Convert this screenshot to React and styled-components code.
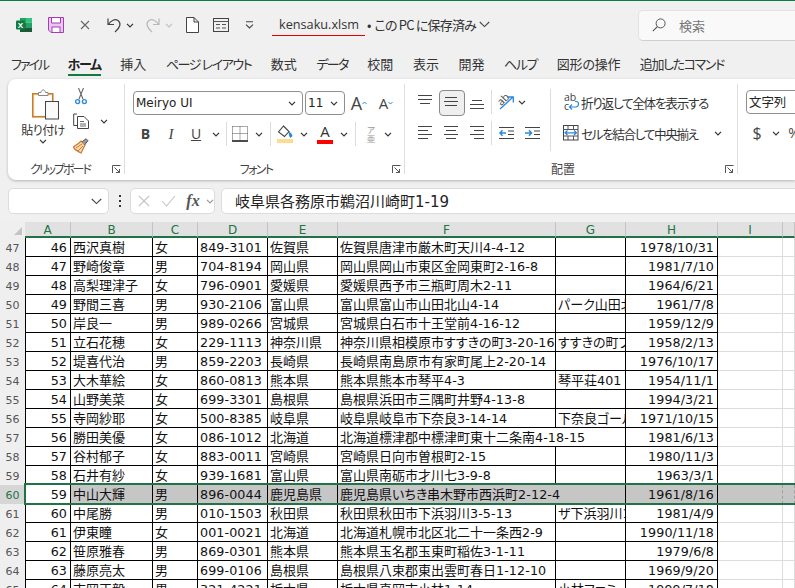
import React from "react";
import styled, { createGlobalStyle } from "styled-components";

const Global = createGlobalStyle`
  html, body { margin: 0; padding: 0; background: #f0f0f0; }
  * { box-sizing: border-box; }
`;

const UI = `"Noto Sans CJK JP", "Noto Sans", sans-serif`;
const SHEET_FONT = `"DejaVu Sans", "Noto Sans CJK JP", sans-serif`;
const COLS = "25px 46px 82px 45px 70px 70px 218px 70px 92px 65px 1fr";

const Window = styled.div`
  width: 795px; height: 588px; overflow: hidden; display: flex; flex-direction: column;
  background: #f0f0f0; border-top: 1px solid #107c41; font-family: ${UI};
  font-feature-settings: "palt" 1; color: #333;
`;
const TitleBar = styled.div`
  height: 50px; flex: none; display: flex; align-items: center; padding-left: 8px; padding-bottom: 2px;
`;
const Slot = styled.div`
  flex: none; display: flex; align-items: center; justify-content: center;
  width: ${p => p.$w || 24}px; height: ${p => p.$h || 24}px; margin-left: ${p => p.$ml || 0}px;
  color: #444; overflow: visible;
`;
const DocTitle = styled.div`
  margin-left: 11px; flex: none; display: flex; align-items: center; gap: 2px; font-size: 13px; color: #333;
`;
const FileName = styled.span`
  font-family: "Open Sans", sans-serif; font-size: 12.7px; padding: 0 6px 1px 7px; border-bottom: 1px solid #e00000; line-height: 19px;
`;
const SaveState = styled.span`
  display: inline-flex; align-items: center; gap: 3px; padding-bottom: 1px;
`;
const SaveDot = styled.span`
  margin-right: 3px;
`;
const SaveText = styled.span`
  letter-spacing: -0.8px;
`;
const SearchBox = styled.div`
  margin-left: auto; margin-right: -12px; width: 169px; height: 31px; flex: none; background: #f9f9f9;
  border: 1px solid #e2e2e2; border-bottom-color: #cfcfcf; border-radius: 5px; display: flex; align-items: center;
  padding-left: 13px; gap: 13px; font-size: 13px; color: #777;
`;
const TabBar = styled.div`
  height: 28px; flex: none; display: flex; align-items: flex-start; padding: 3px 0 0 11px; gap: 19.5px;
`;
const Tab = styled.div`
  font-size: 13px; line-height: 19px; height: 22px; border-bottom: 2px solid ${p => p.$active ? "#107c41" : "transparent"};
  font-weight: ${p => p.$active ? 700 : 400}; color: ${p => p.$active ? "#222" : "#333"}; white-space: pre;
  letter-spacing: ${p => p.$ls || 0}px;
`;
const Ribbon = styled.div`
  height: 101px; flex: none; margin-left: 8px; background: #fff; border-radius: 8px 0 0 8px;
  box-shadow: 0 1px 3px rgba(0,0,0,.25); display: flex; padding-top: 5px; padding-bottom: 6px;
`;
const Group = styled.div`
  width: ${p => p.$w}px; flex: ${p => p.$grow ? 1 : "none"}; display: flex; flex-direction: column; position: relative;
  border-right: ${p => p.$grow ? "0" : "1px solid #dedede"};
`;
const GroupBody = styled.div`
  flex: 1; display: flex; padding-left: ${p => p.$pl || 0}px; padding-top: ${p => p.$pt || 0}px; min-height: 0;
`;
const GroupLabel = styled.div`
  height: 14px; flex: none; text-align: center; font-size: 12px; line-height: 18px; color: #444;
  padding-right: ${p => p.$pr || 0}px; letter-spacing: ${p => p.$ls || 0}px;
`;
const Launcher = styled.div`
  position: absolute; right: 3px; bottom: -1px; width: 9px; height: 11px; display: flex; align-items: center;
`;
const PasteButton = styled.div`
  width: 46px; margin-left: 12px; flex: none; display: flex; flex-direction: column; align-items: center; padding-top: 4px;
`;
const PasteIconHolder = styled.div`
  margin-left: 6px;
`;
const PasteLabel = styled.div`
  font-size: 12px; line-height: 18px; margin-top: 1px; white-space: nowrap; color: #333; letter-spacing: -0.6px;
`;
const SmallTools = styled.div`
  margin-left: 4px; display: flex; flex-direction: column; gap: 1px;
`;
const ToolRow = styled.div`
  display: flex; align-items: center; height: 24px;
`;
const Rows = styled.div`
  display: flex; flex-direction: column; gap: 7px; width: ${p => p.$w ? p.$w + "px" : "auto"}; flex: none;
`;
const SelectBox = styled.div`
  width: ${p => p.$w}px; height: 24px; flex: none; background: #fff; border: 1px solid #8f8f8f; border-radius: 4px;
  display: flex; align-items: center; justify-content: space-between; padding: 0 6px 0 2px; margin-right: ${p => p.$mr || 0}px;
  font-family: ${p => p.$latin ? `"DejaVu Sans", sans-serif` : UI}; font-size: ${p => p.$latin ? 12 : 12.4}px; color: #222;
`;
const ShortSep = styled.div`
  width: 1px; height: 24px; flex: none; background: #dcdcdc; margin-left: ${p => p.$ml || 0}px; margin-right: ${p => p.$mr || 0}px;
`;
const TallSep = styled.div`
  width: 1px; height: 62px; flex: none; background: #dcdcdc; margin-top: -1px;
`;
const SelectedSlot = styled(Slot)`
  position: relative;
  &::before { content: ""; position: absolute; left: 1px; top: 0; width: 24px; height: 24px; background: #efefef; border: 1px solid #8a8a8a; border-radius: 4px; }
  & > svg { position: relative; }
`;
const WrapRow = styled.div`
  display: flex; align-items: center; height: 24px; font-size: 12.6px; white-space: nowrap; color: #333; padding-left: 10px;
`;
const WrapText = styled.span`
  letter-spacing: ${p => p.$ls}px;
`;
const Letter = styled.span`
  font-family: ${p => p.$serif ? `"Liberation Serif", serif` : `"Open Sans", sans-serif`};
  font-size: ${p => p.$size || 14}px; font-weight: ${p => p.$bold ? 700 : 400}; font-style: ${p => p.$italic ? "italic" : "normal"};
  text-decoration: ${p => p.$under ? "underline" : "none"}; line-height: 1; color: ${p => p.$color || "#444"};
`;
const ColorLetter = styled.div`
  display: flex; flex-direction: column; align-items: center; width: 16px;
`;
const ColorBar = styled.div`
  width: 16px; height: 4px; background: ${p => p.$c}; margin-top: ${p => p.$mt || 0}px;
`;
const Phonetic = styled.div`
  display: flex; flex-direction: column; align-items: center; font-size: 8.5px; line-height: 9px; color: #999;
`;
const FormulaRow = styled.div`
  height: 42px; flex: none; display: flex; align-items: center; padding-left: 8px; margin-top: 0;
`;
const FieldBox = styled.div`
  height: 26px; flex: ${p => p.$grow ? 1 : "none"}; width: ${p => p.$w ? p.$w + "px" : "auto"};
  background: #fff; border: 1px solid #dcdcdc; border-radius: 5px; display: flex; align-items: center;
  margin-right: ${p => p.$grow ? "-6px" : "0"};
`;
const NameChevron = styled.div`
  margin-left: auto; margin-right: 6px; display: flex;
`;
const Dots = styled.div`
  width: 21px; flex: none; display: flex; flex-direction: column; align-items: center; gap: 3px;
  & > i { display: block; width: 2px; height: 2px; background: #333; }
`;
const FxText = styled.span`
  font-family: "Liberation Serif", serif; font-style: italic; font-weight: 700; font-size: 16px; color: #555;
`;
const FormulaText = styled.span`
  font-family: ${SHEET_FONT}; font-size: 15px; color: #222; padding-left: 13px; padding-bottom: 1px; white-space: nowrap;
`;
const Sheet = styled.div`
  flex: 1; min-height: 0; overflow: hidden; background: #fff; font-family: ${SHEET_FONT};
`;
const HeaderRow = styled.div`
  display: grid; grid-template-columns: ${COLS}; height: 16px;
`;
const Corner = styled.div`
  background: #efefef; display: flex; align-items: flex-end; justify-content: flex-end; padding: 0 3px 3px 0;
`;
const ColHead = styled.div`
  background: #e1e1e1; border-right: 1px solid #c4c4c4; border-bottom: 2px solid #217346;
  color: #217346; font-size: 12px; line-height: 17px; text-align: center; height: 16px;
`;
const Row = styled.div`
  display: grid; grid-template-columns: ${COLS}; height: 19px; position: relative; background: ${p => p.$sel ? "#c6c6c6" : "#fff"};
`;
const RowHead = styled.div`
  background: ${p => p.$sel ? "#d6d6d6" : "#efefef"}; border-bottom: 1px solid #dadada;
  color: ${p => p.$sel ? "#217346" : "#555"}; font-size: 11px; line-height: 19px; padding-top: 1px; text-align: center; padding-right: 0;
`;
const Cell = styled.div`
  font-size: 13px; line-height: 20px; height: 19px; white-space: nowrap; color: #111;
  overflow: ${p => p.$spill ? "visible" : "hidden"};
  padding: 0 ${p => p.$right ? 3 : 2}px 0 2px; text-align: ${p => p.$right ? "right" : "left"};
  background: ${p => p.$white ? "#fff" : "transparent"};
  border-left: ${p => p.$first ? "1px solid #000" : "0"};
  border-right: ${p => p.$spill ? "0" : "1px solid #000"};
  border-bottom: 1px solid #000;
`;
const Ascii = styled.span`
  font-size: 12.7px; letter-spacing: 0.1px;
`;
const GridCell = styled.div`
  height: 19px; border-right: 1px ${p => p.$sel ? "dashed #a0a0a0" : "solid #dcdcdc"}; border-bottom: 1px solid #dcdcdc;
`;
const SelectionBox = styled.div`
  position: absolute; left: 24px; right: -4px; top: -2px; height: 22px; border: 2px solid #217346; pointer-events: none; z-index: 3;
`;

const Mixed = ({ text }) => String(text).split(/([\x00-\x7f]+)/).map((part, i) =>
  i % 2 ? <Ascii key={i}>{part}</Ascii> : part
);

const Ic = ({ w = 16, h = 16, children }) => (
  <svg width={w} height={h} viewBox={`0 0 ${w} ${h}`} fill="none" style={{ display: "block", flex: "none" }}>{children}</svg>
);
const Chev = ({ c = "#333" }) => <Ic w={8} h={5}><path d="M1 .8 4 3.8 7 .8" stroke={c} strokeWidth="1.2" /></Ic>;
const BigChev = () => <Ic w={11} h={7}><path d="M.8 1 5.5 5.6 10.2 1" stroke="#444" strokeWidth="1.1" /></Ic>;
const LauncherIcon = () => (
  <Ic w={9} h={9}><path d="M.5 8V.5H8.5M2.5 2.5 7.5 7.5M4 7.5H7.5V4" stroke="#555" strokeWidth="1" /></Ic>
);
const ExcelIcon = () => (
  <Ic>
    <rect x="4" y="1" width="6" height="4.7" fill="#21a366" />
    <rect x="10" y="1" width="6" height="4.7" fill="#33c481" />
    <rect x="4" y="5.7" width="6" height="4.7" fill="#107c41" />
    <rect x="10" y="5.7" width="6" height="4.7" fill="#21a366" />
    <rect x="4" y="10.4" width="12" height="4.6" fill="#185c37" />
    <rect x="0" y="3.5" width="9" height="9" rx="1" fill="#107c41" />
    <text x="4.5" y="10.8" textAnchor="middle" fontSize="8" fontWeight="700" fontFamily="Liberation Sans" fill="#fff">X</text>
  </Ic>
);
const SaveIcon = () => (
  <Ic>
    <path d="M.5.5H15.5V15.5H3L.5 13Z" fill="#e9c8ee" stroke="#a83cb8" />
    <path d="M3.5 1V6H12.5V1" fill="#fff" stroke="#a83cb8" />
    <rect x="4" y="10" width="8" height="5.5" fill="#fff" stroke="#a83cb8" />
  </Ic>
);
const CloseX = () => <Ic w={10} h={10}><path d="M1 1 9 9M9 1 1 9" stroke="#666" strokeWidth="1.1" /></Ic>;
const Undo = ({ c = "#444", flip }) => (
  <svg width="16" height="16" viewBox="0 0 16 16" fill="none" style={{ display: "block", transform: flip ? "scaleX(-1)" : "none" }}>
    <path d="M2 1.5V7.5H8" stroke={c} strokeWidth="1.2" />
    <path d="M2.3 7.3C5 3.5 9 1.5 12 3.5 15.3 6 14.5 10.5 9 15" stroke={c} strokeWidth="1.2" />
  </svg>
);
const DocIcon = () => <Ic w={13} h={16}><path d="M.5.5H8L12.5 5V15.5H.5ZM8 .5V5H12.5" stroke="#444" fill="#fff" /></Ic>;
const FormIcon = () => (
  <Ic>
    <rect x=".5" y="1.5" width="15" height="13" stroke="#444" />
    <path d="M.5 4.5H15.5M3 7.5H7M9 7.5H13M3 11H7M9 11H13" stroke="#555" />
  </Ic>
);
const QuickDrop = () => <Ic w={9} h={8}><path d="M1 .8H8M1 3.6 4.5 7 8 3.6" stroke="#444" strokeWidth="1.1" /></Ic>;
const SearchIcon = () => (
  <Ic w={14} h={14}><circle cx="8.6" cy="5.4" r="4.5" stroke="#555" /><path d="M5.4 8.6.8 13.2" stroke="#555" strokeWidth="1.1" /></Ic>
);
const PasteIcon = () => (
  <Ic w={28} h={32}>
    <rect x=".8" y="5.8" width="20" height="23" fill="#fdf6ec" stroke="#c8781e" strokeWidth="1.5" />
    <rect x="3" y="8" width="16" height="19" fill="#fff" />
    <path d="M6.5 7.5V4.5H9C9.5 1 13 1 13.5 4.5H16V7.5Z" fill="#fff" stroke="#888" />
    <rect x="13.5" y="13.5" width="13" height="17.5" fill="#fafafa" stroke="#444" />
  </Ic>
);
const ScissorsIcon = () => (
  <Ic w={12} h={17}>
    <path d="M3.5 0 8 11M8.5 0 4 11" stroke="#666" strokeWidth="1.1" />
    <circle cx="2.6" cy="13.6" r="2" stroke="#2b88d8" strokeWidth="1.4" />
    <circle cx="9.4" cy="13.6" r="2" stroke="#2b88d8" strokeWidth="1.4" />
  </Ic>
);
const CopyIcon = () => (
  <Ic w={16} h={16}>
    <path d="M4 1H.7V12.5H4" stroke="#444" />
    <path d="M4.5 3.5H11L15.5 8V15.5H4.5Z" fill="#fff" stroke="#444" />
    <path d="M7 8.5H11M7 11H13M7 13H13" stroke="#666" />
  </Ic>
);
const PainterIcon = () => (
  <Ic w={16} h={16}>
    <path d="M8 3 12 7 8 15C4 13 1 11 .5 9L6 5Z" fill="#f8dcb8" stroke="#d0782a" strokeWidth="1.2" />
    <path d="M3 10 9 6M5 13 10 8" stroke="#d0782a" />
    <path d="M9 4 13 .7 15 2.7 11.5 7" fill="#999" stroke="#555" />
  </Ic>
);
const BorderIcon = () => (
  <Ic w={16} h={16}>
    <path d="M.5 .5H15.5V14M.5 .5V14M8 .5V14M.5 7.5H15.5" stroke="#555" strokeDasharray="1 1" />
    <path d="M0 15H16" stroke="#000" strokeWidth="1.4" />
  </Ic>
);
const BucketIcon = () => (
  <Ic w={16} h={14}>
    <path d="M6.5 1 12 6.5 7.5 11.5 1.5 7Z" fill="#fff" stroke="#444" strokeWidth="1.1" />
    <path d="M13.5 13C12 12 11.5 8.5 11.8 6.5 13.5 7 15 9 15.5 11Z" fill="#2b88d8" />
  </Ic>
);
const Lines = ({ rows }) => (
  <Ic w={16} h={16}>
    {rows.map(([x1, x2, y], i) => <path key={i} d={`M${x1} ${y}H${x2}`} stroke="#444" strokeWidth="1" />)}
  </Ic>
);
const IndentIcon = ({ out }) => (
  <Ic w={15} h={14}>
    <path d="M0 1.5H15M9 5H15M9 8.5H15M0 12.5H15" stroke="#444" />
    <path d={out ? "M7 7H1M3.5 4.3 1 7 3.5 9.7" : "M0 7H6.5M4 4.3 6.5 7 4 9.7"} stroke="#2b88d8" strokeWidth="1.5" />
  </Ic>
);
const OrientLabel = styled.span`
  position: absolute; left: -1px; top: 0; font-family: "Open Sans", sans-serif; font-size: 10.5px; line-height: 11px; color: #444; transform: rotate(-45deg);
`;
const OrientWrap = styled.div`
  position: relative; width: 16px; height: 16px;
`;
const OrientIcon = () => (
  <OrientWrap>
    <OrientLabel>ab</OrientLabel>
    <Ic w={16} h={16}><path d="M2 15 15 3M9.5 3H15.3V8.5" stroke="#2b88d8" strokeWidth="1.3" /></Ic>
  </OrientWrap>
);
const WrapIconBox = styled.div`
  width: 14px; height: 18px; position: relative; font-family: "Open Sans", sans-serif; font-size: 10.5px; line-height: 9px; color: #444;
`;
const WrapArrowHolder = styled.div`
  position: absolute; left: 4px; top: 8px;
`;
const WrapIcon = () => (
  <WrapIconBox>
    ab<br />c
    <WrapArrowHolder>
      <Ic w={11} h={10}><path d="M7 .5H8.5C11.5 1 11 5.5 8 6H1.5M4 3.5 1.5 6 4 8.5" stroke="#2b88d8" strokeWidth="1.2" /></Ic>
    </WrapArrowHolder>
  </WrapIconBox>
);
const MergeIcon = () => (
  <Ic w={16} h={16}>
    <rect x=".5" y=".5" width="14.5" height="14.5" stroke="#444" />
    <path d="M.5 4.5H15M.5 11H15M5 .5V4.5M10.5 .5V4.5M5 11V15M10.5 11V15" stroke="#555" />
    <path d="M2 7.8H13.5M4.5 5.5 2 7.8 4.5 10M11 5.5 13.5 7.8 11 10" stroke="#2b88d8" strokeWidth="1.2" />
  </Ic>
);
const Triangle = () => <Ic w={8} h={8}><path d="M8 0V8H0Z" fill="#c4c4c4" /></Ic>;

const TABS = [
  ["ファイル", -2], ["ホーム", -1.3], ["挿入", 0], ["ページ レイアウト", -1.4], ["数式", 0], ["データ", -1.6],
  ["校閲", 0], ["表示", 0], ["開発", 0], ["ヘルプ", -1.3], ["図形の操作", -0.2], ["追加したコマンド", -1.4],
];
const COLUMN_NAMES = ["A", "B", "C", "D", "E", "F", "G", "H", "I", ""];
const DATA = [
  [46, "西沢真樹", "女", "849-3101", "佐賀県", "佐賀県唐津市厳木町天川4-4-12", "", "1978/10/31"],
  [47, "野崎俊章", "男", "704-8194", "岡山県", "岡山県岡山市東区金岡東町2-16-8", "", "1981/7/10"],
  [48, "高梨理津子", "女", "796-0901", "愛媛県", "愛媛県西予市三瓶町周木2-11", "", "1964/6/21"],
  [49, "野間三喜", "男", "930-2106", "富山県", "富山県富山市山田北山4-14", "パーク山田北山", "1961/7/8"],
  [50, "岸良一", "男", "989-0266", "宮城県", "宮城県白石市十王堂前4-16-12", "", "1959/12/9"],
  [51, "立石花穂", "女", "229-1113", "神奈川県", "神奈川県相模原市すすきの町3-20-16", "すすきの町プラザ", "1958/2/13"],
  [52, "堤喜代治", "男", "859-2203", "長崎県", "長崎県南島原市有家町尾上2-20-14", "", "1976/10/17"],
  [53, "大木華絵", "女", "860-0813", "熊本県", "熊本県熊本市琴平4-3", "琴平荘401", "1954/11/1"],
  [54, "山野美菜", "女", "699-3301", "島根県", "島根県浜田市三隅町井野4-13-8", "", "1994/3/21"],
  [55, "寺岡紗耶", "女", "500-8385", "岐阜県", "岐阜県岐阜市下奈良3-14-14", "下奈良ゴールド", "1971/10/15"],
  [56, "勝田美優", "女", "086-1012", "北海道", "北海道標津郡中標津町東十二条南4-18-15", "", "1981/6/13", true],
  [57, "谷村郁子", "女", "883-0011", "宮崎県", "宮崎県日向市曽根町2-15", "", "1980/11/3"],
  [58, "石井有紗", "女", "939-1681", "富山県", "富山県南砺市才川七3-9-8", "", "1963/3/1"],
  [59, "中山大輝", "男", "896-0044", "鹿児島県", "鹿児島県いちき串木野市西浜町2-12-4", "", "1961/8/16", true],
  [60, "中尾勝", "男", "010-1503", "秋田県", "秋田県秋田市下浜羽川3-5-13", "ザ下浜羽川101", "1981/4/9"],
  [61, "伊東瞳", "女", "001-0021", "北海道", "北海道札幌市北区北二十一条西2-9", "", "1990/11/18"],
  [62, "笹原雅春", "男", "869-0301", "熊本県", "熊本県玉名郡玉東町稲佐3-1-11", "", "1979/6/8"],
  [63, "藤原亮太", "男", "699-0106", "島根県", "島根県八束郡東出雲町春日1-12-10", "", "1969/9/20"],
  [64, "吉岡正毅", "男", "321-4221", "栃木県", "栃木県真岡市小林1-14", "小林ファミール", "1999/7/18"],
];

export default function App() {
  return (
    <Window>
      <Global />
      <TitleBar>
        <Slot $w={32}><ExcelIcon /></Slot>
        <Slot $w={32}><SaveIcon /></Slot>
        <Slot $w={26}><CloseX /></Slot>
        <Slot $ml={4}><Undo /></Slot>
        <Slot $w={8}><Chev /></Slot>
        <Slot $ml={7}><Undo c="#b8b8b8" flip /></Slot>
        <Slot $w={8}><Chev c="#c0c0c0" /></Slot>
        <Slot $ml={7}><DocIcon /></Slot>
        <Slot $ml={5}><FormIcon /></Slot>
        <Slot $ml={4}><QuickDrop /></Slot>
        <DocTitle>
          <FileName>kensaku.xlsm</FileName>
          <SaveState><span><SaveDot>•</SaveDot><SaveText>この PC に保存済み</SaveText></span><BigChev /></SaveState>
        </DocTitle>
        <SearchBox><SearchIcon />検索</SearchBox>
      </TitleBar>
      <TabBar>
        {TABS.map(([t, ls]) => <Tab key={t} $ls={ls} $active={t === "ホーム"}>{t}</Tab>)}
      </TabBar>
      <Ribbon>
        <Group $w={117}>
          <GroupBody>
            <PasteButton>
              <PasteIconHolder><PasteIcon /></PasteIconHolder>
              <PasteLabel>貼り付け</PasteLabel>
              <Chev />
            </PasteButton>
            <SmallTools>
              <ToolRow><Slot $w={22}><ScissorsIcon /></Slot></ToolRow>
              <ToolRow><Slot $w={22}><CopyIcon /></Slot><Slot><Chev /></Slot></ToolRow>
              <ToolRow><Slot $w={22}><PainterIcon /></Slot></ToolRow>
            </SmallTools>
          </GroupBody>
          <GroupLabel $pr={12} $ls={-2}>クリップボード</GroupLabel>
          <Launcher><LauncherIcon /></Launcher>
        </Group>
        <Group $w={280}>
          <GroupBody $pl={8} $pt={7}>
            <Rows>
              <ToolRow>
                <SelectBox $w={170} $mr={2} $latin>Meiryo UI<Chev /></SelectBox>
                <SelectBox $w={40} $latin>11<Chev /></SelectBox>
                <Slot $w={20} $ml={4}><Letter $size={18}>A</Letter><Ic w={5} h={4}><path d="M.5 3 2.5 1 4.5 3" stroke="#2b88d8" /></Ic></Slot>
                <Slot $w={20} $ml={7}><Letter $size={15}>A</Letter><Ic w={5} h={4}><path d="M.5 1 2.5 3 4.5 1" stroke="#2b88d8" /></Ic></Slot>
              </ToolRow>
              <ToolRow>
                <Slot $w={25}><Letter $bold $size={14}>B</Letter></Slot>
                <Slot $w={26}><Letter $serif $italic $size={15}>I</Letter></Slot>
                <Slot $w={24}><Letter $under $size={14}>U</Letter></Slot>
                <Slot $w={16}><Chev /></Slot>
                <ShortSep $ml={2} $mr={2} />
                <Slot $w={22}><BorderIcon /></Slot>
                <Slot $w={16}><Chev /></Slot>
                <ShortSep $ml={3} $mr={1} />
                <Slot $w={26}><ColorLetter><BucketIcon /><ColorBar $c="#fedc8f" /></ColorLetter></Slot>
                <Slot $w={12}><Chev /></Slot>
                <Slot $w={30}><ColorLetter><Letter $size={15} $color="#333">A</Letter><ColorBar $c="#ff0000" $mt={1} /></ColorLetter></Slot>
                <Slot $w={8}><Chev /></Slot>
                <ShortSep $ml={7} $mr={3} />
                <Slot><Phonetic>ア<span>亜</span></Phonetic></Slot>
                <Slot $w={10}><Chev /></Slot>
              </ToolRow>
            </Rows>
          </GroupBody>
          <GroupLabel $pr={17} $ls={-1.7}>フォント</GroupLabel>
          <Launcher><LauncherIcon /></Launcher>
        </Group>
        <Group $w={333}>
          <GroupBody $pl={7} $pt={6}>
            <Rows $w={138}>
              <ToolRow>
                <Slot $w={26}><Lines rows={[[1, 15, 1.5], [1, 15, 5.5], [3, 13, 9.5]]} /></Slot>
                <SelectedSlot $w={26}><Lines rows={[[2, 14, 3.5], [1, 15, 7.5], [2, 14, 11.5]]} /></SelectedSlot>
                <Slot $w={26}><Lines rows={[[3, 13, 6.5], [1, 15, 10.5], [1, 15, 14.5]]} /></Slot>
                <ShortSep $ml={1} $mr={2} />
                <Slot><OrientIcon /></Slot>
                <Slot $w={8}><Chev /></Slot>
              </ToolRow>
              <ToolRow>
                <Slot $w={26}><Lines rows={[[1, 15, 1.5], [1, 11, 5.5], [1, 15, 9.5], [1, 11, 13.5]]} /></Slot>
                <Slot $w={26}><Lines rows={[[1, 15, 1.5], [3, 13, 5.5], [1, 15, 9.5], [3, 13, 13.5]]} /></Slot>
                <Slot $w={26}><Lines rows={[[1, 15, 1.5], [5, 15, 5.5], [1, 15, 9.5], [5, 15, 13.5]]} /></Slot>
                <ShortSep $ml={1} $mr={1} />
                <Slot $w={26}><IndentIcon out /></Slot>
                <Slot $w={26}><IndentIcon /></Slot>
              </ToolRow>
            </Rows>
            <TallSep />
            <Rows>
              <WrapRow><Slot $w={20}><WrapIcon /></Slot><WrapText $ls={-1.25}>折り返して全体を表示する</WrapText></WrapRow>
              <WrapRow>
                <Slot $w={20}><MergeIcon /></Slot><WrapText $ls={-1.35}>セルを結合して中央揃え</WrapText>
                <Slot $w={40}><Chev /></Slot>
              </WrapRow>
            </Rows>
          </GroupBody>
          <GroupLabel $pr={16}>配置</GroupLabel>
          <Launcher><LauncherIcon /></Launcher>
        </Group>
        <Group $grow>
          <GroupBody $pl={8} $pt={6}>
            <Rows>
              <ToolRow><SelectBox $w={100}>文字列</SelectBox></ToolRow>
              <ToolRow>
                <Slot $w={22}><Letter $size={16}>$</Letter></Slot>
                <Slot $w={16}><Chev /></Slot>
                <Slot $w={20}><Letter $size={14}>%</Letter></Slot>
              </ToolRow>
            </Rows>
          </GroupBody>
        </Group>
      </Ribbon>
      <FormulaRow>
        <FieldBox $w={101}><NameChevron><BigChev /></NameChevron></FieldBox>
        <Dots><i /><i /><i /></Dots>
        <FieldBox $w={85}>
          <Slot $w={25}><Ic w={12} h={12}><path d="M1 1 11 11M11 1 1 11" stroke="#c4c4c4" strokeWidth="1.1" /></Ic></Slot>
          <Slot><Ic w={15} h={12}><path d="M1 6 5.5 11 14 1" stroke="#c4c4c4" strokeWidth="1.1" /></Ic></Slot>
          <Slot $w={26}><FxText>fx</FxText></Slot>
          <Slot $w={8}><Chev c="#999" /></Slot>
        </FieldBox>
        <Slot $w={6} />
        <FieldBox $grow><FormulaText>岐阜県各務原市鵜沼川崎町1-19</FormulaText></FieldBox>
      </FormulaRow>
      <Sheet>
        <HeaderRow>
          <Corner><Triangle /></Corner>
          {COLUMN_NAMES.map((c, i) => <ColHead key={i}>{c}</ColHead>)}
        </HeaderRow>
        {DATA.map(d => {
          const sel = d[0] === 59;
          return (
            <Row key={d[0]} $sel={sel}>
              <RowHead $sel={sel}>{d[0] + 1}</RowHead>
              <Cell $first $right $white={sel}><Mixed text={d[0]} /></Cell>
              <Cell>{d[1]}</Cell>
              <Cell>{d[2]}</Cell>
              <Cell><Mixed text={d[3]} /></Cell>
              <Cell>{d[4]}</Cell>
              <Cell $spill={d[8]}><Mixed text={d[5]} /></Cell>
              <Cell><Mixed text={d[6]} /></Cell>
              <Cell $right><Mixed text={d[7]} /></Cell>
              <GridCell $sel={sel} />
              <GridCell $sel={sel} />
              {sel && <SelectionBox />}
            </Row>
          );
        })}
      </Sheet>
    </Window>
  );
}
